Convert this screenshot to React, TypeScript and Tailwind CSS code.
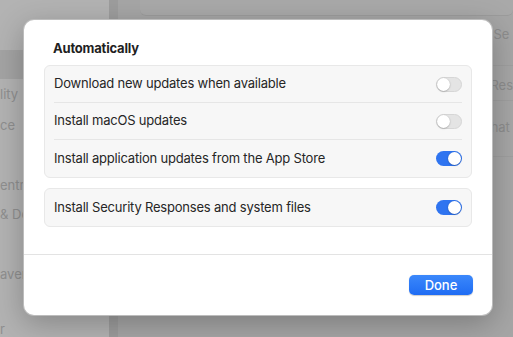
import React from "react";

// tails of sidebar labels that peek out left of the sheet
const sidebarItems = [
  { text: "lity", gap: "mt-[7px]" },
  { text: "ce", gap: "mt-[15px]" },
  { text: "entr", gap: "mt-[44px]" },
  { text: "& Do", gap: "mt-[13px]" },
  { text: "aver", gap: "mt-[44px]" },
  { text: "r", gap: "mt-[39px]" },
];

const Toggle = ({ on }: { on: boolean }) => (
  <div
    className={
      on
        ? "w-[26px] h-[15px] rounded-full bg-[#2f74f0] flex items-center justify-end px-[1px]"
        : "w-[26px] h-[15px] rounded-full bg-[#e4e4e4] border border-[#d6d6d6] flex items-center justify-start"
    }
  >
    <div className="w-[13px] h-[13px] rounded-full bg-white shadow-[0_0.5px_1.5px_rgba(0,0,0,0.35)]"></div>
  </div>
);

const Row = ({ text, on, last }: { text: string; on: boolean; last?: boolean }) => (
  <div className="px-[9px]">
    <div className={`h-[37px] flex items-center justify-between ${last ? "" : "border-b border-[#e6e6e6]"}`}>
      <span className="text-[13px] tracking-[-0.2px] text-[#262626]">{text}</span>
      <Toggle on={on} />
    </div>
  </div>
);

export default function App() {
  return (
    <div
      className="relative w-[513px] h-[337px] overflow-hidden flex bg-[#a9a9a9]"
      style={{ fontFamily: "Inter, 'Noto Sans', sans-serif" }}
    >
      {/* Background: settings window, dimmed */}
      <div className="w-[112px] h-full bg-[#b3b3b3] flex flex-col">
        <div className="mt-[50px] h-[30px] bg-[#a4a4a4]"></div>
        {sidebarItems.map((item, i) => (
          <div key={i} className={`${item.gap} h-[16px] leading-[16px] text-[13px] text-[#8f8f8f]`}>
            {item.text}
          </div>
        ))}
      </div>
      <div className="w-[10px] h-full bg-[#9d9d9d]"></div>
      <div className="flex-1 h-full flex flex-col bg-[#a6a6a6]">
        <div className="ml-[22px] h-[16px] rounded-b-[6px] border-b border-[#9c9c9c] bg-[#a9a9a9]"></div>
        <div className="h-[49px] pt-[10px] pl-[375px] leading-[16px] text-[13px] text-[#8d8d8d]">Se</div>
        <div className="h-[35px] border-t border-[#9f9f9f] pt-[11px] pl-[372px] leading-[16px] text-[13px] text-[#8d8d8d]">Res</div>
        <div className="h-[56px] border-t border-[#9f9f9f] pt-[18px] pl-[368px] leading-[16px] text-[13px] text-[#8d8d8d]">that</div>
        <div className="border-t border-[#9f9f9f]"></div>
      </div>

      {/* Modal sheet */}
      <div className="absolute left-[23px] top-[19px] w-[470px] h-[297px] bg-white rounded-[11px] border border-[#8f8f8f]/60 shadow-[0_8px_30px_rgba(0,0,0,0.25)] flex flex-col">
        <div className="px-[20px] pt-[20px] flex-1">
          <div className="pl-[9px] text-[13px] font-bold tracking-[-0.2px] text-[#1f1f1f] leading-[16px]">Automatically</div>
          <div className="mt-[9px] bg-[#f7f7f7] border border-[#e8e8e8] rounded-[6px]">
            <Row text="Download new updates when available" on={false} />
            <Row text="Install macOS updates" on={false} />
            <Row text="Install application updates from the App Store" on={true} last />
          </div>
          <div className="mt-[10px] bg-[#f7f7f7] border border-[#e8e8e8] rounded-[6px]">
            <Row text="Install Security Responses and system files" on={true} last />
          </div>
        </div>
        <div className="h-[61px] border-t border-[#e3e3e3] flex items-start justify-end pr-[19px] pt-[20px]">
          <button className="w-[64px] h-[20px] rounded-[5px] bg-gradient-to-b from-[#3b88fb] to-[#1f6cf3] text-white text-[13px] font-medium leading-[20px] shadow-[0_0.5px_1px_rgba(0,0,0,0.2)]">
            Done
          </button>
        </div>
      </div>
    </div>
  );
}
